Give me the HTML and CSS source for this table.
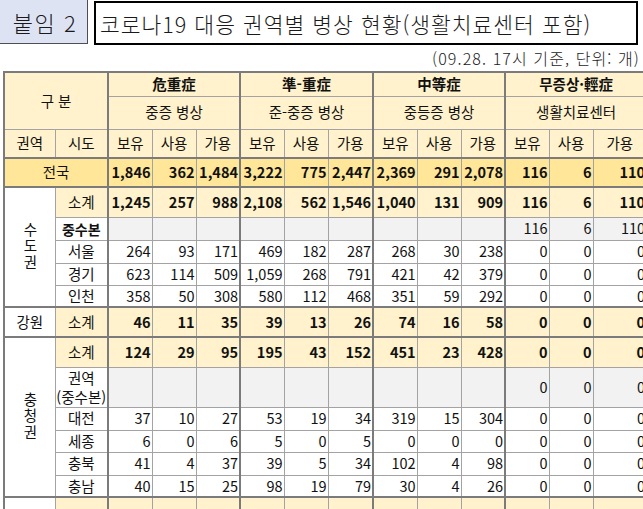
FILE: index.html
```html
<!DOCTYPE html>
<html lang="ko">
<head>
<meta charset="utf-8">
<title>코로나19 대응 권역별 병상 현황</title>
<link rel="stylesheet" href="styles.css">
</head>
<body>
<div class="page">
  <div class="top">
    <div class="tag">붙임 2</div>
    <div class="title">코로나19 대응 권역별 병상 현황(생활치료센터 포함)</div>
  </div>
  <div class="note">(09.28. 17시 기준, 단위: 개)</div>
  <table class="grid">
    <colgroup class="grp">
      <col class="w-region"><col class="w-city">
    </colgroup>
    <colgroup class="grp">
      <col class="w-n"><col class="w-n"><col class="w-n">
    </colgroup>
    <colgroup class="grp">
      <col class="w-n"><col class="w-n"><col class="w-n5">
    </colgroup>
    <colgroup class="grp">
      <col class="w-n"><col class="w-n"><col class="w-n">
    </colgroup>
    <colgroup class="grp">
      <col class="w-n"><col class="w-n"><col class="w-last">
    </colgroup>
    <thead>
      <tr class="h1">
        <th class="hd" colspan="2" rowspan="2">구 분</th>
        <th class="hd b" colspan="3">危重症</th>
        <th class="hd b" colspan="3">準-重症</th>
        <th class="hd b" colspan="3">中等症</th>
        <th class="hd b" colspan="3">무증상·輕症</th>
      </tr>
      <tr class="h2">
        <th class="hd" colspan="3">중증 병상</th>
        <th class="hd" colspan="3">준-중증 병상</th>
        <th class="hd" colspan="3">중등증 병상</th>
        <th class="hd" colspan="3">생활치료센터</th>
      </tr>
      <tr class="h3 thick">
        <th class="hd">권역</th><th class="hd">시도</th>
        <th class="hd">보유</th><th class="hd">사용</th><th class="hd">가용</th>
        <th class="hd">보유</th><th class="hd">사용</th><th class="hd">가용</th>
        <th class="hd">보유</th><th class="hd">사용</th><th class="hd">가용</th>
        <th class="hd">보유</th><th class="hd">사용</th><th class="hd">가용</th>
      </tr>
    </thead>
    <tbody>
      <tr class="r-total thick">
        <td class="lbl" colspan="2">전국</td>
        <td>1,846</td><td>362</td><td>1,484</td>
        <td>3,222</td><td>775</td><td>2,447</td>
        <td>2,369</td><td>291</td><td>2,078</td>
        <td>116</td><td>6</td><td>110</td>
      </tr>
      <tr class="r-sub">
        <td class="region" rowspan="5"><span class="vert">수도권</span></td>
        <td class="lbl">소계</td>
        <td>1,245</td><td>257</td><td>988</td>
        <td>2,108</td><td>562</td><td>1,546</td>
        <td>1,040</td><td>131</td><td>909</td>
        <td>116</td><td>6</td><td>110</td>
      </tr>
      <tr class="r-hq">
        <td class="lbl hq">중수본</td>
        <td></td><td></td><td></td>
        <td></td><td></td><td></td>
        <td></td><td></td><td></td>
        <td>116</td><td>6</td><td>110</td>
      </tr>
      <tr class="r-row r23">
        <td class="lbl">서울</td>
        <td>264</td><td>93</td><td>171</td>
        <td>469</td><td>182</td><td>287</td>
        <td>268</td><td>30</td><td>238</td>
        <td>0</td><td>0</td><td>0</td>
      </tr>
      <tr class="r-row">
        <td class="lbl">경기</td>
        <td>623</td><td>114</td><td>509</td>
        <td>1,059</td><td>268</td><td>791</td>
        <td>421</td><td>42</td><td>379</td>
        <td>0</td><td>0</td><td>0</td>
      </tr>
      <tr class="r-row thick">
        <td class="lbl">인천</td>
        <td>358</td><td>50</td><td>308</td>
        <td>580</td><td>112</td><td>468</td>
        <td>351</td><td>59</td><td>292</td>
        <td>0</td><td>0</td><td>0</td>
      </tr>
      <tr class="r-sub thick">
        <td class="region">강원</td>
        <td class="lbl">소계</td>
        <td>46</td><td>11</td><td>35</td>
        <td>39</td><td>13</td><td>26</td>
        <td>74</td><td>16</td><td>58</td>
        <td>0</td><td>0</td><td>0</td>
      </tr>
      <tr class="r-sub">
        <td class="region" rowspan="6"><span class="vert">충청권</span></td>
        <td class="lbl">소계</td>
        <td>124</td><td>29</td><td>95</td>
        <td>195</td><td>43</td><td>152</td>
        <td>451</td><td>23</td><td>428</td>
        <td>0</td><td>0</td><td>0</td>
      </tr>
      <tr class="r-hq r-tall">
        <td class="lbl hq2"><span class="two">권역<br>(중수본)</span></td>
        <td></td><td></td><td></td>
        <td></td><td></td><td></td>
        <td></td><td></td><td></td>
        <td>0</td><td>0</td><td>0</td>
      </tr>
      <tr class="r-row r23">
        <td class="lbl">대전</td>
        <td>37</td><td>10</td><td>27</td>
        <td>53</td><td>19</td><td>34</td>
        <td>319</td><td>15</td><td>304</td>
        <td>0</td><td>0</td><td>0</td>
      </tr>
      <tr class="r-row">
        <td class="lbl">세종</td>
        <td>6</td><td>0</td><td>6</td>
        <td>5</td><td>0</td><td>5</td>
        <td>0</td><td>0</td><td>0</td>
        <td>0</td><td>0</td><td>0</td>
      </tr>
      <tr class="r-row r23">
        <td class="lbl">충북</td>
        <td>41</td><td>4</td><td>37</td>
        <td>39</td><td>5</td><td>34</td>
        <td>102</td><td>4</td><td>98</td>
        <td>0</td><td>0</td><td>0</td>
      </tr>
      <tr class="r-row thick">
        <td class="lbl">충남</td>
        <td>40</td><td>15</td><td>25</td>
        <td>98</td><td>19</td><td>79</td>
        <td>30</td><td>4</td><td>26</td>
        <td>0</td><td>0</td><td>0</td>
      </tr>
      <tr class="r-sub">
        <td class="region"></td>
        <td class="lbl"></td>
        <td></td><td></td><td></td>
        <td></td><td></td><td></td>
        <td></td><td></td><td></td>
        <td></td><td></td><td></td>
      </tr>
    </tbody>
  </table>
</div>
</body>
</html>
```
FILE: styles.css
```css
html, body {
  margin: 0;
  padding: 0;
  overflow: hidden;
  background: #ffffff;
}

body {
  font-family: "Noto Sans CJK KR", "Noto Sans", sans-serif;
  color: #111111;
}

.page {
  display: flex;
  flex-direction: column;
  width: 700px;
}

.top {
  display: flex;
  align-items: flex-start;
  height: 45px;
}

.tag {
  box-sizing: border-box;
  width: 88px;
  height: 44px;
  background: #dee3f4;
  border-right: 1px solid #4d4d55;
  border-bottom: 1px solid #4d4d55;
  display: flex;
  align-items: center;
  justify-content: center;
  font-size: 22px;
  font-weight: 300;
  letter-spacing: 1.5px;
  color: #1a1a1a;
  padding-left: 3px;
}

.title {
  box-sizing: border-box;
  margin-left: 6px;
  margin-top: 1px;
  width: 544px;
  height: 44px;
  border: 2px solid #000000;
  display: flex;
  align-items: center;
  padding-left: 4px;
  font-size: 21.5px;
  font-weight: 300;
  letter-spacing: 1px;
  color: #1a1a1a;
  white-space: nowrap;
}

.note {
  width: 643px;
  box-sizing: border-box;
  height: 26px;
  line-height: 26px;
  text-align: right;
  padding-right: 3px;
  font-size: 16px;
  font-weight: 300;
  letter-spacing: 1.1px;
  color: #1a1a1a;
}

.grid {
  margin-left: 3px;
  border-collapse: collapse;
  table-layout: fixed;
  width: 643px;
  border: 2px solid #7b7b7b;
  font-size: 14.5px;
  line-height: 1;
}

.grp {
  border-left: 2px solid #7b7b7b;
  border-right: 2px solid #7b7b7b;
}

.w-region { width: 51px; }
.w-city { width: 53px; }
.w-n { width: 44px; }
.w-n5 { width: 45px; }
.w-last { width: 54px; }

.grid th,
.grid td {
  border: 1px solid #a3a3a3;
  padding: 0 1px 0 0;
  vertical-align: middle;
  white-space: nowrap;
  overflow: hidden;
}

.grid td {
  text-align: right;
}

.grid th {
  font-weight: normal;
  text-align: center;
  background: #fff2cc;
  padding: 0;
}

.grid th.b {
  font-weight: bold;
}

.h1 { height: 24px; }
.h2 { height: 33px; }
.h3 { height: 29px; }

.thick {
  border-bottom: 2px solid #7b7b7b;
}

.grid td.lbl {
  text-align: center;
  padding: 0;
}

.grid td.region {
  text-align: center;
  padding: 0;
  background: #ffffff;
}

.vert {
  display: inline-block;
  writing-mode: vertical-rl;
  text-orientation: upright;
  letter-spacing: 2px;
  line-height: 1;
}

.two {
  display: inline-block;
  line-height: 19px;
}

.r-total {
  height: 29px;
  background: #ffe699;
  font-weight: bold;
}

.r-total td.lbl {
  font-weight: normal;
}

.r-sub {
  height: 30px;
  background: #fff2cc;
  font-weight: bold;
}

.r-sub td.lbl,
.r-sub td.region {
  font-weight: normal;
}

.r-sub td.lbl {
  background: #fff2cc;
}

.r-hq {
  height: 23px;
  background: #f2f2f2;
}

.r-hq td.lbl {
  background: #ffffff;
  font-weight: bold;
  font-size: 14px;
}

.r-hq td.hq2 {
  font-weight: normal;
  font-size: 14.5px;
}

.r-tall {
  height: 40px;
}

.r-row {
  height: 22px;
  background: #ffffff;
}

.r23 {
  height: 23px;
}
```
